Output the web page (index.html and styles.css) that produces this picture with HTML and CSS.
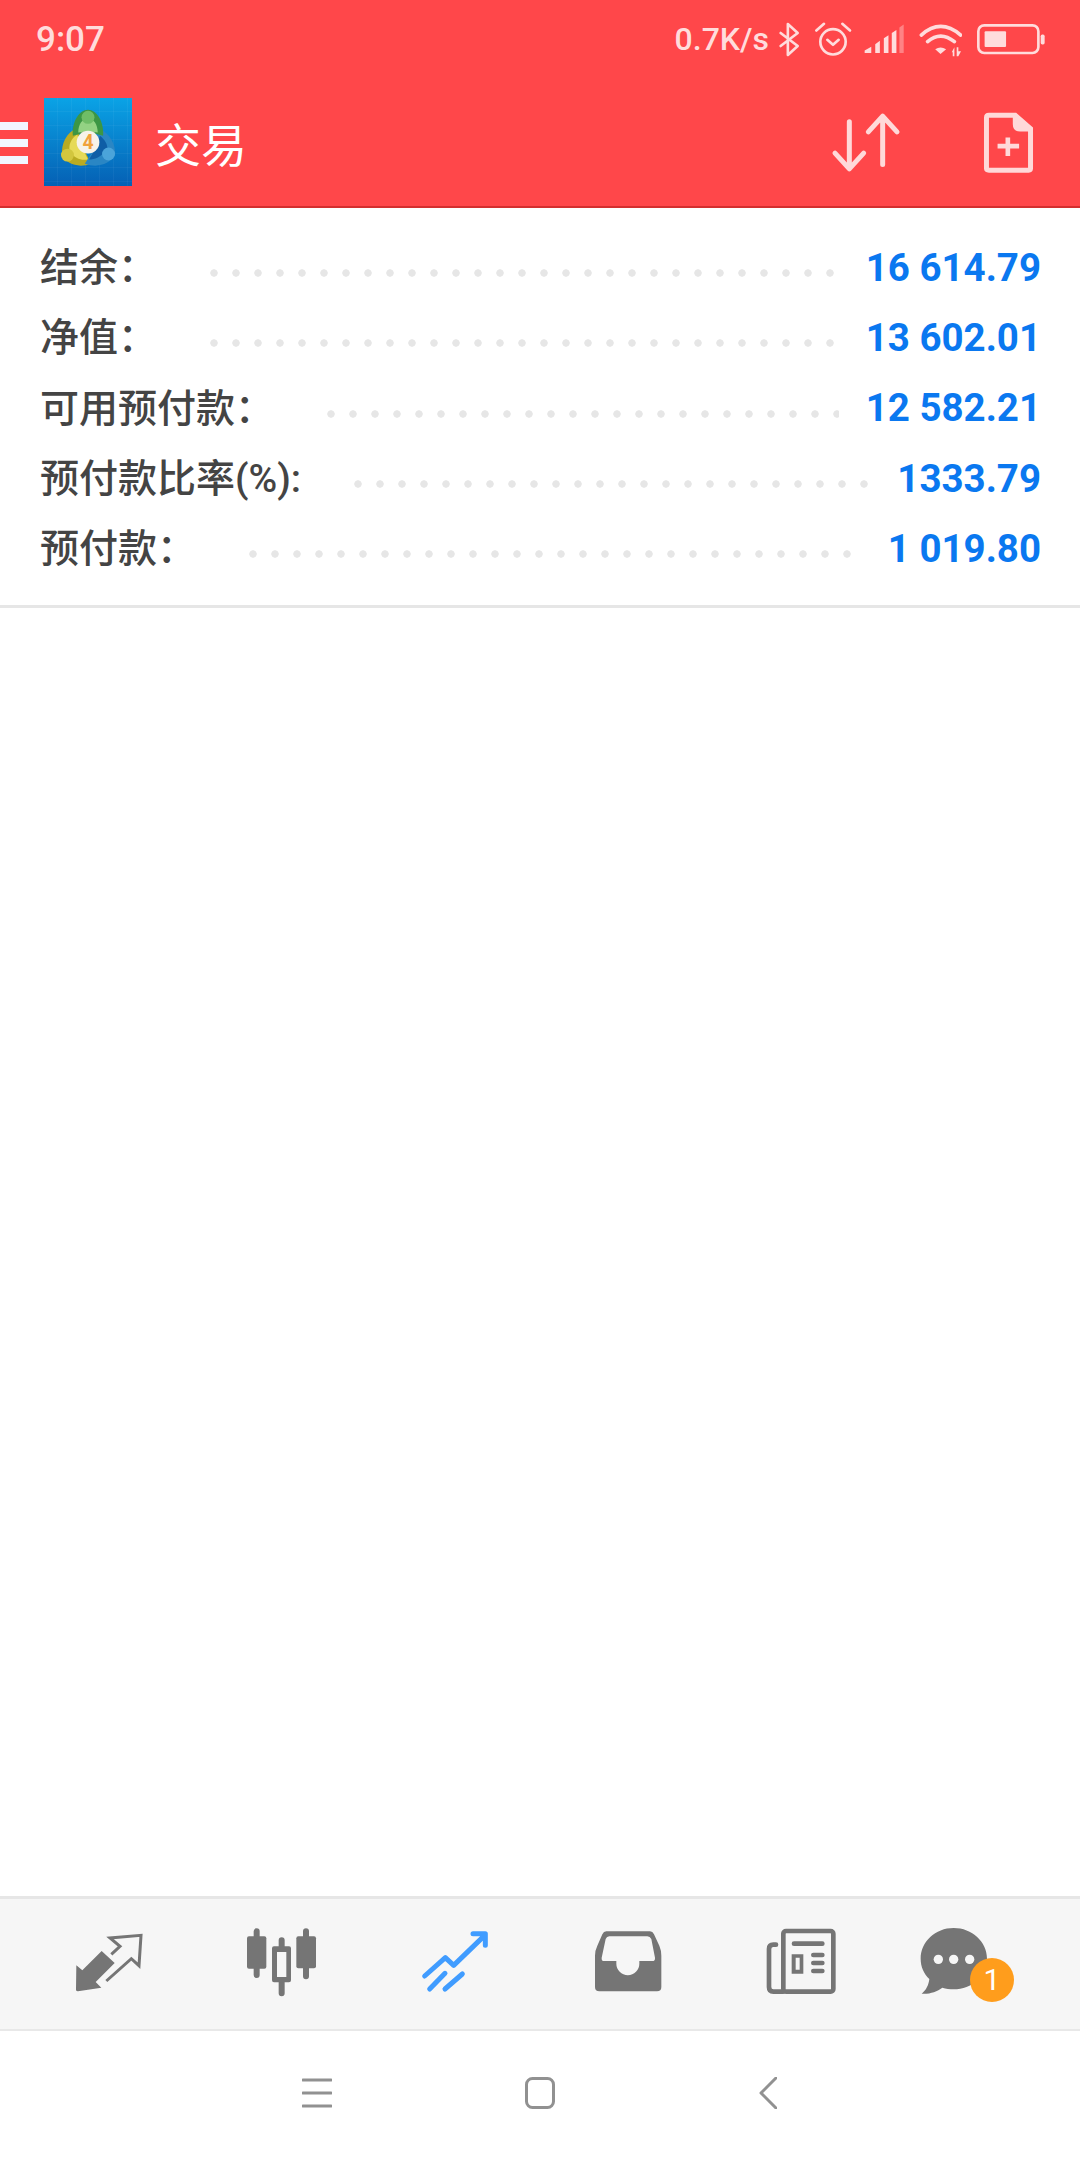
FILE: index.html
```html
<!DOCTYPE html>
<html lang="zh-CN">
<head>
    <meta charset="UTF-8">
    <meta name="viewport" content="width=device-width, initial-scale=1.0">
    <title>交易</title>
    <link rel="stylesheet" href="styles.css">
</head>
<body>

<header class="header">
    <div class="status-bar">
        <span class="time">9:07</span>
        <div class="status-icons">
            <span class="speed">0.7K/s</span>
            <svg class="st-bt" viewBox="410 60 70 110"><path class="st-line" d="M418 95 L470 135 L440 162 V68 L470 95 L418 135"/></svg>
            <svg class="st-alarm" viewBox="515 60 120 110"><circle class="st-line" cx="575" cy="122" r="38"/><path class="st-line" d="M558 116 L575 131 L592 116 M525 88 L548 68 M603 68 L626 88"/></svg>
            <svg class="st-signal" viewBox="665 65 130 95"><path class="st-fill" d="M670 155 V147 L690 136 V155 Z M702 155 V128 L716 118 V155 Z M728 155 V110 L742 101 V155 Z M752 155 V94 L766 85 V155 Z"/><path class="st-fill st-faded" d="M775 155 V78 L788 69 V155 Z"/></svg>
            <svg class="st-wifi" viewBox="835 65 130 105"><path class="st-line st-thick" d="M842 104 Q900 52 961 104 M861 124 Q900 90 942 124"/><path class="st-fill" d="M884 147 Q900 136 917 147 L900 161 Z M934 156 L942 141 V168 H937 V156 Z M949 168 V141 H954 V153 H962 L954 168 Z"/></svg>
            <svg class="st-battery" viewBox="1008 65 210 97"><rect class="st-line" x="1014" y="72" width="182" height="84" rx="18"/><rect class="st-fill" x="1033" y="90" width="65" height="48" rx="3"/><rect class="st-fill" x="1203" y="100" width="12" height="30" rx="5"/></svg>
        </div>
    </div>
    <div class="toolbar">
        <div class="menu-btn"><span></span><span></span><span></span></div>
        <svg class="logo" viewBox="0 0 88 88">
            <defs>
                <linearGradient id="logoBg" x1="0" y1="0" x2="0" y2="1">
                    <stop offset="0" stop-color="#0aa3e6"/>
                    <stop offset="1" stop-color="#0560b4"/>
                </linearGradient>
                <pattern id="logoGrid" width="14" height="14" patternUnits="userSpaceOnUse">
                    <path d="M14 0 V14 H0" fill="none" stroke="#fff" stroke-opacity="0.08"/>
                </pattern>
            </defs>
            <rect width="88" height="88" fill="url(#logoBg)"/>
            <rect width="88" height="88" fill="url(#logoGrid)"/>
            <g transform="translate(44 42) scale(1.08) translate(-44 -42)">
                <path d="M34 31 C24 35 19 46 20 56 C24 65 36 68 47 64 L40 50 Z" fill="#b9ab22"/>
                <path d="M34 37 C28 41 26 47 27 52 C32 60 38 61 44 60 L38 48 Z" fill="#e6da58"/>
                <path d="M54 31 C64 36 70 46 69 56 C64 65 52 68 41 64 L50 50 Z" fill="#2a86c4"/>
                <path d="M55 38 C60 42 62 46 62 50 C56 58 50 60 45 60 L52 48 Z" fill="#0f5ea6"/>
                <path d="M30 38 C29 25 36 14 44 14 C52 14 59 25 58 38 L50 36 L38 36 Z" fill="#3c9644"/>
                <path d="M35 35 C35 27 39 22 44 22 C49 22 53 27 53 35 L44 34 Z" fill="#93d283"/>
                <circle cx="44" cy="21" r="6" fill="#6fbd66"/>
                <circle cx="25" cy="56" r="6" fill="#d2c63e"/>
                <circle cx="63" cy="55" r="6" fill="#4ba4da"/>
                <circle cx="44" cy="44" r="10.5" fill="#f6f2ea"/>
                <text class="logo-num" x="44" y="50">4</text>
            </g>
        </svg>
        <h1 class="title">交易</h1>
        <div class="toolbar-actions">
            <svg class="ic-sort" viewBox="570 330 210 185"><path d="M625 362 V500 M582 456 L625 503 L668 456 M725 490 V345 M682 392 L725 345 L768 392"/></svg>
            <svg class="ic-doc" viewBox="1025 330 160 190"><path fill-rule="evenodd" d="M1046 335 H1128 L1179 380 V503 Q1179 516 1166 516 H1046 Q1031 516 1031 503 V350 Q1031 335 1046 335 Z M1046 350 V501 H1164 V392 H1140 Q1118 392 1118 370 V350 Z"/><path d="M1096 410 H1110 V429 H1137 V443 H1110 V466 H1096 V443 H1072 V429 H1096 Z"/></svg>
        </div>
    </div>
</header>

<main class="content">
    <div class="summary">
        <div class="row"><span class="label">结余：</span><span class="dots"></span><span class="value">16 614.79</span></div>
        <div class="row"><span class="label">净值：</span><span class="dots"></span><span class="value">13 602.01</span></div>
        <div class="row"><span class="label">可用预付款：</span><span class="dots"></span><span class="value">12 582.21</span></div>
        <div class="row"><span class="label">预付款比率(%):</span><span class="dots"></span><span class="value">1333.79</span></div>
        <div class="row"><span class="label">预付款：</span><span class="dots"></span><span class="value">1 019.80</span></div>
    </div>
</main>

<nav class="tabs">
    <div class="tab">
        <svg class="tab-icon" viewBox="70 110 270 270">
            <path class="solid" d="M107 255 L125 270 L183 212 L222 248 L165 305 L182 322 L112 333 Q106 333 106 328 Z"/>
            <path class="outline" d="M212 222 L238 198 L208 173 L301 165 L295 256 L272 235 L197 302"/>
        </svg>
    </div>
    <div class="tab">
        <svg class="tab-icon" viewBox="590 110 270 270">
            <path class="outline wick" d="M649 153 V284 M797 153 V288 M724 180 V200 M724 305 V339"/>
            <rect class="solid" x="620" y="168" width="58" height="97" rx="6"/>
            <rect class="solid" x="768" y="168" width="59" height="96" rx="6"/>
            <path class="solid" fill-rule="evenodd" d="M701 198 H746 Q752 198 752 204 V300 Q752 306 746 306 H701 Q695 306 695 300 V204 Q695 198 701 198 Z M710 215 V290 H738 V215 Z"/>
        </svg>
    </div>
    <div class="tab">
        <svg class="tab-icon" viewBox="1107 110 270 270">
            <path class="active-line" d="M1151 287 L1213 232 L1238 255 L1328 168 M1296 160 H1333 V195 M1166 326 L1212 279 M1212 326 L1264 281"/>
        </svg>
    </div>
    <div class="tab">
        <svg class="tab-icon" viewBox="127 110 270 270">
            <path class="solid" fill-rule="evenodd" d="M197 153 H328 Q336 153 340 162 L356 196 Q362 210 362 226 V320 Q362 333 349 333 H176 Q163 333 163 320 V226 Q163 210 170 196 L185 162 Q189 153 197 153 Z M206 168 Q198 168 195 176 L183 232 Q182 242 190 242 H227 V250 A34 34 0 0 0 296 250 V242 H335 Q344 242 343 232 L332 176 Q328 168 320 168 Z"/>
        </svg>
    </div>
    <div class="tab">
        <svg class="tab-icon" viewBox="648 110 270 270">
            <rect class="outline paper" x="730" y="152" width="150" height="182" rx="8"/>
            <path class="outline paper" d="M708 193 H700 Q687 193 687 206 V320 Q687 334 700 334 H730"/>
            <path class="outline paper" d="M762 190 H847 M820 224 H847 M820 248 H847 M820 272 H847"/>
            <path class="solid" fill-rule="evenodd" d="M755 222 H790 V280 H755 Z M767 232 V268 H779 V232 Z"/>
        </svg>
    </div>
    <div class="tab">
        <svg class="tab-icon" viewBox="1164 110 270 270">
            <path class="solid" d="M1238 143 C1293 143 1338 184 1338 235 C1338 286 1293 327 1238 327 C1226 327 1215 325 1204 322 C1188 334 1165 342 1142 340 C1155 330 1163 314 1165 296 C1148 280 1139 258 1139 235 C1139 184 1183 143 1238 143 Z"/>
            <circle class="bubble-dot" cx="1192" cy="237" r="14"/>
            <circle class="bubble-dot" cx="1238" cy="237" r="14"/>
            <circle class="bubble-dot" cx="1286" cy="237" r="14"/>
        </svg>
        <span class="badge">1</span>
    </div>
</nav>

<footer class="sys-nav">
    <svg class="sys-menu" viewBox="0 0 30 30"><path d="M1 2 H29 M1 15 H29 M1 28 H29"/></svg>
    <svg class="sys-home" viewBox="0 0 30 32"><rect x="1.5" y="1.5" width="27" height="29" rx="6"/></svg>
    <svg class="sys-back" viewBox="0 0 18 32"><path d="M17 1 L2 16 L17 31"/></svg>
</footer>

</body>
</html>
```

FILE: styles.css
```css
* {
    box-sizing: border-box;
}
body {
    margin: 0;
    width: 1080px;
    height: 2160px;
    display: flex;
    flex-direction: column;
    background: #fff;
    font-family: Roboto, "Noto Sans CJK SC", sans-serif;
    overflow: hidden;
}

/* red top area */
.header {
    height: 208px;
    background: #ff474a;
    border-bottom: 2px solid #d32f2f;
    color: #ffdcdc;
}
.status-bar {
    height: 78px;
    display: flex;
    justify-content: space-between;
    align-items: center;
    padding: 0 34px 0 36px;
}
.time {
    font-size: 35px;
    font-weight: 500;
}
.status-icons {
    display: flex;
    align-items: center;
}
.speed {
    font-size: 32px;
    font-weight: 500;
    margin-right: 9px;
}
.status-icons svg {
    display: block;
}
.st-line {
    fill: none;
    stroke: #ffdcdc;
    stroke-width: 8;
    stroke-linecap: round;
    stroke-linejoin: round;
}
.st-thick {
    stroke-width: 11;
}
.st-fill {
    fill: #ffdcdc;
}
.st-faded {
    opacity: 0.4;
}
.st-bt {
    width: 23px;
    height: 37px;
}
.st-alarm {
    width: 40px;
    height: 37px;
    margin-left: 12px;
}
.st-signal {
    width: 43px;
    height: 32px;
    margin-left: 10px;
}
.st-wifi {
    width: 43px;
    height: 35px;
    margin-left: 13px;
}
.st-battery {
    width: 70px;
    height: 32px;
    margin-left: 14px;
}

.toolbar {
    height: 128px;
    display: flex;
    align-items: center;
}
.menu-btn {
    width: 28px;
    margin-top: 2px;
    display: flex;
    flex-direction: column;
    gap: 9px;
}
.menu-btn span {
    height: 8px;
    background: #f2f6ff;
}
.logo {
    width: 88px;
    height: 88px;
    margin-left: 16px;
}
.logo-num {
    font-family: Roboto, sans-serif;
    font-size: 18px;
    font-weight: 700;
    fill: #f0a23c;
    text-anchor: middle;
}
.title {
    margin: 0 0 0 23px;
    font-family: "Noto Sans CJK SC", sans-serif;
    font-size: 46px;
    font-weight: 400;
    color: #fff;
}
.toolbar-actions {
    margin-left: auto;
    padding-right: 45px;
    display: flex;
    align-items: center;
    gap: 81px;
}
.ic-sort {
    width: 70px;
    height: 62px;
    fill: none;
    stroke: #ffd9d9;
    stroke-width: 15;
    stroke-linecap: round;
    stroke-linejoin: round;
}
.ic-doc {
    width: 53px;
    height: 63px;
    fill: #ffd9d9;
}

/* account numbers */
.content {
    flex: 1;
}
.summary {
    padding: 23px 0 23px 40px;
    border-bottom: 3px solid #e6e6e6;
}
.row {
    height: 70.3px;
    display: flex;
    align-items: center;
    padding-right: 39px;
}
.label {
    font-family: Roboto, "Noto Sans CJK SC", sans-serif;
    font-size: 39px;
    font-weight: 500;
    color: #444;
    white-space: nowrap;
    margin-top: -4px;
}
.dots {
    flex: 1;
    height: 8px;
    margin: 14px 27px 0 53px;
    background: radial-gradient(circle 4px at 4px 4px, #e6e6e6 85%, transparent) 0 0 / 22px 8px repeat-x;
}
.value {
    font-size: 38.5px;
    font-weight: 700;
    color: #0a78f0;
    white-space: nowrap;
    margin-top: 2px;
}

/* bottom tabs */
.tabs {
    height: 135px;
    display: grid;
    grid-template-columns: repeat(6, 173px);
    padding: 0 22px;
    background: #f6f6f6;
    border-top: 3px solid #e6e6e6;
    border-bottom: 2px solid #e8e8e8;
}
.tab {
    position: relative;
    display: flex;
    justify-content: center;
    align-items: center;
}
.tab-icon {
    width: 90px;
    height: 90px;
    overflow: visible;
    margin-top: -5px;
}
.solid {
    fill: #757575;
}
.outline {
    fill: none;
    stroke: #757575;
    stroke-width: 9;
}
.wick {
    stroke-width: 18;
    stroke-linecap: round;
}
.paper {
    stroke-width: 14;
    stroke-linecap: round;
}
.active-line {
    fill: none;
    stroke: #409cff;
    stroke-width: 15;
    stroke-linecap: round;
    stroke-linejoin: round;
}
.bubble-dot {
    fill: #f6f6f6;
}
.badge {
    position: absolute;
    left: 83px;
    top: 59px;
    width: 44px;
    height: 44px;
    border-radius: 50%;
    background: #ff9d1c;
    color: #fff;
    font-size: 30px;
    line-height: 44px;
    text-align: center;
}

/* android nav */
.sys-nav {
    height: 129px;
    display: flex;
    align-items: center;
    padding: 0 0 6px 302px;
}
.sys-nav svg {
    fill: none;
    stroke: #919191;
    stroke-width: 3;
    stroke-linecap: round;
    stroke-linejoin: round;
}
.sys-menu {
    width: 30px;
    height: 30px;
}
.sys-home {
    width: 30px;
    height: 32px;
    margin-left: 193px;
}
.sys-back {
    width: 18px;
    height: 32px;
    margin-left: 204px;
}
```
